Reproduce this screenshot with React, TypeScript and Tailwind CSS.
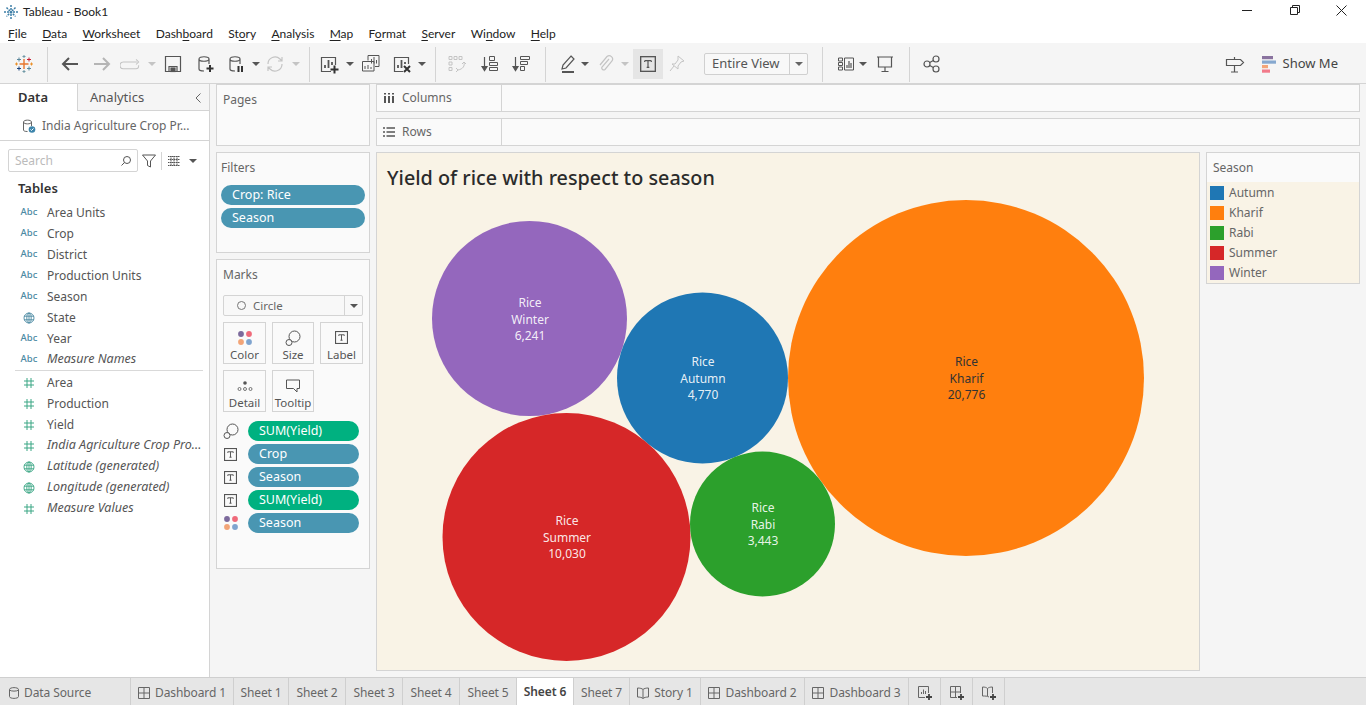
import type { ReactNode } from "react";

const menus: [string, string, string][] = [
  ["", "F", "ile"],
  ["", "D", "ata"],
  ["", "W", "orksheet"],
  ["Dash", "b", "oard"],
  ["St", "o", "ry"],
  ["", "A", "nalysis"],
  ["", "M", "ap"],
  ["F", "o", "rmat"],
  ["", "S", "erver"],
  ["Wi", "n", "dow"],
  ["", "H", "elp"],
];

const dimensions = ["Area Units", "Crop", "District", "Production Units", "Season", "State", "Year", "Measure Names"];
const measures = ["Area", "Production", "Yield", "India Agriculture Crop Pro...", "Latitude (generated)", "Longitude (generated)", "Measure Values"];
const legend = [
  ["Autumn", "bg-[#1f77b4]"],
  ["Kharif", "bg-[#ff7f0e]"],
  ["Rabi", "bg-[#2ca02c]"],
  ["Summer", "bg-[#d62728]"],
  ["Winter", "bg-[#9467bd]"],
];
const bubbles = [
  { cx: 589, cy: 225, r: 178, fill: "#ff7f0e", ink: "#333333", textY: 213, lines: ["Rice", "Kharif", "20,776"] },
  { cx: 152.5, cy: 165.5, r: 97.5, fill: "#9467bd", ink: "#ffffff", textY: 154, lines: ["Rice", "Winter", "6,241"] },
  { cx: 325.5, cy: 225, r: 85.5, fill: "#1f77b4", ink: "#ffffff", textY: 213, lines: ["Rice", "Autumn", "4,770"] },
  { cx: 189.5, cy: 384, r: 124, fill: "#d62728", ink: "#ffffff", textY: 372, lines: ["Rice", "Summer", "10,030"] },
  { cx: 385.5, cy: 371, r: 72.5, fill: "#2ca02c", ink: "#ffffff", textY: 359, lines: ["Rice", "Rabi", "3,443"] },
];

function Icon({ className = "", size = 20, children }: { className?: string; size?: number; children: ReactNode }) {
  return (
    <svg
      viewBox="0 0 20 20"
      width={size}
      height={size}
      fill="none"
      stroke="currentColor"
      strokeWidth="1.2"
      className={`shrink-0 ${className}`}
    >
      {children}
    </svg>
  );
}

function Caret({ className = "text-[#777]" }: { className?: string }) {
  return <span className={`h-0 w-[8px] shrink-0 border-x-[4px] border-t-[4px] border-x-transparent border-t-current ${className}`} />;
}

function Sep({ className = "" }: { className?: string }) {
  return <span className={`h-[35px] w-px shrink-0 bg-[#d4d4d4] ${className}`} />;
}

function TableauLogo() {
  return (
    <svg viewBox="0 0 20 20" width={20} height={20} strokeWidth="1" className="shrink-0">
      <path d="M10 5v10M5.5 10h9" stroke="#e8762d" strokeWidth="1.4" />
      <path d="M5 3.5v4M3 5.5h4" stroke="#5b879b" />
      <path d="M15 3.5v4M13 5.5h4" stroke="#c72035" />
      <path d="M5 12.5v4M3 14.5h4" stroke="#1f447e" />
      <path d="M15 12.5v4M13 14.5h4" stroke="#59879b" />
      <path d="M10 1v3M8.5 2.5h3M10 16v3M8.5 17.5h3" stroke="#7099a6" />
      <path d="M2.5 8.5v3M1 10h3M17.5 8.5v3M16 10h3" stroke="#eb912b" />
    </svg>
  );
}

function Hash({ className = "" }: { className?: string }) {
  return (
    <svg viewBox="0 0 12 12" width={12} height={12} fill="none" stroke="currentColor" strokeWidth="1" className={className}>
      <path d="M4 1v10M8 1v10M1 4h10M1 8h10" />
    </svg>
  );
}

function Globe({ className = "" }: { className?: string }) {
  return (
    <svg viewBox="0 0 12 12" width={12} height={12} fill="none" stroke="currentColor" strokeWidth="0.9" className={className}>
      <circle cx="6" cy="6" r="5" />
      <ellipse cx="6" cy="6" rx="2.2" ry="5" />
      <path d="M1 4.2h10M1 7.8h10M6 1v10" />
    </svg>
  );
}

function TBox({ size = 12 }: { size?: number }) {
  return (
    <svg viewBox="0 0 12 12" width={size} height={size} fill="none" className="shrink-0 text-[#555]">
      <rect x="0.5" y="0.5" width="11" height="11" stroke="currentColor" strokeWidth="1" />
      <path d="M3.5 3.5h5M6 3.5v5M5 8.5h2M3.5 3.5v1M8.5 3.5v1" stroke="currentColor" strokeWidth="0.9" />
    </svg>
  );
}

function Dots() {
  return (
    <svg viewBox="0 0 16 16" width={16} height={16} className="shrink-0">
      <circle cx="4" cy="4" r="2.9" fill="#7c6a9c" />
      <circle cx="12" cy="4" r="2.9" fill="#ef6a7a" />
      <circle cx="4" cy="12" r="2.9" fill="#f2a477" />
      <circle cx="12" cy="12" r="2.9" fill="#7fa4cf" />
    </svg>
  );
}

function SizeGlyph() {
  return (
    <svg viewBox="0 0 16 16" width={16} height={16} fill="none" stroke="#555" strokeWidth="1" className="shrink-0">
      <circle cx="9.5" cy="6.5" r="5.5" />
      <circle cx="4" cy="12.5" r="3" fill="#fafafa" />
    </svg>
  );
}

function MarkButton({ label, children, className = "" }: { label: string; children: ReactNode; className?: string }) {
  return (
    <div className={`flex h-[42px] flex-col items-center border border-[#d4d4d4] pt-[6px] text-[11.5px] leading-[14px] text-[#555] ${className}`}>
      <span className="flex h-[17px] items-center">{children}</span>
      <span className="mt-[2px]">{label}</span>
    </div>
  );
}

function Pill({ label, green, className = "" }: { label: string; green?: boolean; className?: string }) {
  return (
    <div className={`flex h-[20px] items-center rounded-full pl-[11px] text-[12.5px] text-white ${green ? "bg-[#00b180]" : "bg-[#4996b2]"} ${className}`}>
      {label}
    </div>
  );
}

function Field({ label, kind, italic }: { label: string; kind: "abc" | "globe" | "hash" | "geo"; italic?: boolean }) {
  return (
    <div className="flex h-[21px] items-center text-[#555]">
      <span className="flex w-[47px] shrink-0 justify-center pl-[19px] pr-[8px]">
        {kind === "abc" && <span className="text-[9.5px] font-medium text-[#4c8aa3]">Abc</span>}
        {kind === "globe" && <Globe className="text-[#4c8aa3]" />}
        {kind === "hash" && <Hash className="text-[#3ba684]" />}
        {kind === "geo" && <Globe className="text-[#3ba684]" />}
      </span>
      <span className={italic ? "whitespace-nowrap text-[12.5px] italic" : "text-[12px]"}>{label}</span>
    </div>
  );
}

function Shelf({ label, icon }: { label: string; icon: ReactNode }) {
  return (
    <div className="flex h-[28px] border border-[#d4d4d4] bg-[#fafafa]">
      <div className="flex w-[125px] items-center gap-[7px] border-r border-[#d4d4d4] pl-[6px] text-[12px] text-[#666]">
        {icon}
        {label}
      </div>
    </div>
  );
}

function Tab({ label, className, icon, active }: { label?: string; className: string; icon?: ReactNode; active?: boolean }) {
  return (
    <div
      className={`flex h-full shrink-0 items-center justify-center gap-[5px] border-r border-[#cfcfcf] text-[12px] tracking-[-0.1px] ${
        active ? "bg-white font-semibold text-[#444]" : "pt-[2px] text-[#666]"
      } ${className}`}
    >
      {icon}
      {label}
    </div>
  );
}

const GridIcon = (
  <svg viewBox="0 0 12 12" width={12} height={12} fill="none" stroke="#666" strokeWidth="1">
    <path d="M.5.5h11v11H.5zM6 .5v11M.5 6h11" />
  </svg>
);

export default function App() {
  return (
    <div className="flex h-[705px] w-[1366px] flex-col overflow-hidden bg-[#f5f5f5] font-['Noto_Sans','Open_Sans',sans-serif]">
      {/* window title */}
      <div className="flex h-[22px] shrink-0 items-center bg-white pl-[3px] pt-[1px] font-['Lato',sans-serif] text-[12px] text-[#222]">
        <svg viewBox="0 0 16 16" width={16} height={16} fill="none" stroke="#3d7ea6" strokeWidth="1.5" className="mr-[4px]">
          <path d="M8 1v14M1 8h14M3.5 3.5l9 9M12.5 3.5l-9 9" strokeDasharray="2 1" />
        </svg>
        Tableau - Book1
        <div className="-mt-[3px] ml-auto flex items-center text-[#222]">
          <span className="mr-[38px] h-px w-[10px] bg-[#222]" />
          <svg viewBox="0 0 10 10" width={10} height={10} fill="none" stroke="#222" strokeWidth="1" className="mr-[36px]">
            <path d="M.5 2.5h7v7h-7zM2.5 2.5v-2h7v7h-2" />
          </svg>
          <svg viewBox="0 0 11 11" width={11} height={11} fill="none" stroke="#222" strokeWidth="1" className="mr-[19px]">
            <path d="M.5.5l10 10M10.5.5l-10 10" />
          </svg>
        </div>
      </div>

      {/* menu bar */}
      <div className="flex h-[21px] shrink-0 items-center gap-[15.3px] bg-white pl-[8px] pt-[2px] font-['Lato',sans-serif] text-[12px] text-[#222]">
        {menus.map(([a, b, c]) => (
          <span key={a + b + c}>
            {a}
            <span className="underline underline-offset-2">{b}</span>
            {c}
          </span>
        ))}
      </div>

      {/* toolbar */}
      <div className="flex h-[41px] shrink-0 items-center border-b border-[#d4d4d4] bg-[#f5f5f5] pr-[28px] pt-[2px] text-[#555]">
        <span className="ml-[14px]"><TableauLogo /></span>
        <Sep className="ml-[13px]" />
        <Icon className="ml-[12px]" size={20}><path d="M18 10H3M9 4l-6 6 6 6" strokeWidth="2" /></Icon>
        <Icon className="ml-[12px] text-[#b5b5b5]"><path d="M2 10h15M11 4l6 6-6 6" strokeWidth="2" /></Icon>
        <svg viewBox="0 0 26 20" width={22} height={17} fill="none" stroke="#c4c4c4" strokeWidth="1.2" className="ml-[8px] shrink-0">
          <path d="M8 7H4a3 3 0 0 0 0 8h15a3 3 0 0 0 3-3v-1M19 4l3 3-3 3M8 7h12" />
        </svg>
        <Caret className="ml-[6px] text-[#c4c4c4]" />
        <Icon className="ml-[7px]">
          <path d="M2.5 2.5h15v15h-15zM6 17.5v-5h8v5" />
          <rect x="8" y="14" width="4" height="3.5" fill="currentColor" />
        </Icon>
        <Icon className="ml-[12px]">
          <path d="M4 5v10c0 1.5 3 2 5 2M4 5c0-3 10-3 10 0s-10 3-10 0M14 5v5" />
          <path d="M15 11v7M11.5 14.5h7" stroke="#333" strokeWidth="2" />
        </Icon>
        <Icon className="ml-[11px]">
          <path d="M4 5v10c0 1.5 3 2 5 2M4 5c0-3 10-3 10 0s-10 3-10 0M14 5v5" />
          <path d="M12.5 12v6M16 12v6" stroke="#333" strokeWidth="2" />
        </Icon>
        <Caret className="ml-[6px]" />
        <Icon className="ml-[5px] text-[#c4c4c4]">
          <path d="M3 10a7 7 0 0 1 12-5l2 2M17 10a7 7 0 0 1-12 5l-2-2M17 3v4h-4M3 17v-4h4" />
        </Icon>
        <Caret className="ml-[7px] text-[#c4c4c4]" />
        <Sep className="ml-[9px]" />
        <Icon className="ml-[9px]">
          <path d="M12 17.5H2.5v-14h14V11" />
          <path d="M6 14v-3M9.5 14V6M13 11V8" strokeWidth="1.8" />
          <path d="M15.5 11.5v8M11.5 15.5h8" stroke="#333" strokeWidth="2" />
        </Icon>
        <Caret className="ml-[7px]" />
        <Icon className="ml-[7px]">
          <path d="M7 6.5v-5h11v11h-4M1.5 7.5H13V17H1.5z" strokeWidth="1" />
          <path d="M10.5 9.5V5M13 9.5V3M15.5 9.5V6M4 15v-3M7 15v-4M10 15v-2" strokeWidth="1" />
        </Icon>
        <Icon className="ml-[11px]">
          <path d="M11 17.5H2.5v-14h14V10" />
          <path d="M6 14v-3M9.5 14V6M13 10V8" strokeWidth="1.8" />
          <path d="M12 12l6 6M18 12l-6 6" stroke="#333" strokeWidth="2" />
        </Icon>
        <Caret className="ml-[6px]" />
        <Sep className="ml-[9px]" />
        <Icon className="ml-[11px] text-[#c4c4c4]">
          <path d="M2 2.5h3v3H2zM7 2.5h3v3H7zM12 2.5h3v3h-3zM2 8h3v3H2zM2 13.5h3v3H2z" strokeWidth="1" />
          <path d="M17 8c1 4-1 7-6 8M9 14l2 2-2 2M15 10l2-2 2 2" strokeWidth="1" />
        </Icon>
        <Icon className="ml-[13px]">
          <path d="M4.5 3v12" />
          <path d="M2 12.5l2.5 4 2.5-4z" fill="currentColor" />
          <path d="M9.5 2.5h5v4h-5zM9.5 8.5h8v3h-8zM9.5 13.5h8v3h-8z" strokeWidth="1" />
        </Icon>
        <Icon className="ml-[11px]">
          <path d="M4.5 3v12" />
          <path d="M2 12.5l2.5 4 2.5-4z" fill="currentColor" />
          <path d="M9.5 2.5h9v3h-9zM9.5 7.5h7v3h-7zM9.5 12.5h4v4h-4z" strokeWidth="1" />
        </Icon>
        <Sep className="ml-[14px]" />
        <Icon className="ml-[12px]">
          <path d="M13 2l3 3-8 9-4 1 1-4z" />
          <path d="M4 18h12" strokeWidth="2" />
        </Icon>
        <Caret className="ml-[3px]" />
        <Icon className="ml-[6px] text-[#c4c4c4]">
          <path d="M14 5l-7 8a2 2 0 0 0 3 2.5l7-8.5a3.4 3.4 0 0 0-5-4.5l-7 8.5" />
        </Icon>
        <Caret className="ml-[6px] text-[#c4c4c4]" />
        <div className="ml-[4px] flex h-[30px] w-[30px] shrink-0 items-center justify-center bg-[#e5e5e5]">
          <TBox size={16} />
        </div>
        <Icon className="ml-[4px] text-[#c4c4c4]">
          <path d="M11 2l6 5-3 1-3 4 0 3-6-5 3 0 3-4zM7 12l-4 5" strokeWidth="1" />
        </Icon>
        <div className="ml-[17px] flex h-[22px] w-[104px] shrink-0 items-center rounded-[2px] border border-[#d0d0d0] bg-[#f8f8f8] pl-[7px] text-[13px] text-[#555]">
          Entire View
          <span className="ml-auto flex h-full w-[18px] items-center justify-center border-l border-[#d0d0d0]">
            <Caret className="text-[#666]" />
          </span>
        </div>
        <Sep className="ml-[14px]" />
        <Icon className="ml-[13px]">
          <path d="M2.5 4h4v3h-4zM2.5 8.5h4v3h-4zM2.5 13h4v3h-4zM8.5 4h9v12h-9z" strokeWidth="1" />
          <path d="M11 14v-3M13 14V7M15 14v-5" strokeWidth="1.2" />
        </Icon>
        <Caret className="ml-[3px]" />
        <Icon className="ml-[8px]">
          <path d="M2 3h16M3.5 3v10h13V3M10 13v4M6.5 17.5h7" />
        </Icon>
        <Sep className="ml-[14px]" />
        <Icon className="ml-[12px]">
          <circle cx="5" cy="10" r="3" />
          <circle cx="14" cy="5" r="3" />
          <circle cx="14" cy="15" r="3" />
          <path d="M7.7 8.5l3.7-2M7.7 11.5l3.7 2" />
        </Icon>
        <Icon className="ml-auto">
          <path d="M1.5 5.5h14l3 3-3 3h-14zM9.5 3V5.5M9.5 11.5V18M6 18h7" />
        </Icon>
        <svg viewBox="0 0 15 17" width={15} height={17} className="ml-[17px] shrink-0">
          <rect width="11" height="3.2" fill="#8a739f" />
          <rect y="4.5" width="14" height="3.2" fill="#86a8cf" />
          <rect y="9" width="6" height="3.2" fill="#f3a57a" />
          <rect y="13.5" width="8" height="3.2" fill="#f27a8a" />
        </svg>
        <span className="ml-[6px] text-[13px] text-[#444]">Show Me</span>
      </div>

      {/* workspace */}
      <div className="flex min-h-0 flex-1">
        <aside className="flex w-[210px] shrink-0 flex-col border-r border-[#d4d4d4] bg-white">
          <div className="flex h-[27px] shrink-0 items-center text-[13px]">
            <div className="flex h-full w-[78px] items-center border-r border-[#d4d4d4] pl-[18px] font-semibold text-[#333]">Data</div>
            <div className="flex h-full flex-1 items-center border-b border-[#d4d4d4] bg-[#f5f5f5] pl-[12px] pt-[1px] text-[#555]">
              Analytics
              <svg viewBox="0 0 8 12" width={8} height={12} fill="none" stroke="#666" strokeWidth="1" className="ml-auto mr-[7px]">
                <path d="M6.5 1.5L2 6l4.5 4.5" />
              </svg>
            </div>
          </div>
          <div className="flex h-[30px] shrink-0 items-center border-b border-[#d4d4d4] pl-[22px] text-[12px] text-[#666]">
            <svg viewBox="0 0 14 14" width={14} height={14} fill="none" stroke="#666" strokeWidth="1" className="mr-[6px]">
              <path d="M1.5 3v8c0 1 1.5 1.5 4 1.5M1.5 3c0-2.5 8-2.5 8 0s-8 2.5-8 0M9.5 3v4" />
              <circle cx="10" cy="10.5" r="3.3" fill="#3d85ab" stroke="none" />
              <path d="M8.5 10.5l1 1 2-2" stroke="#fff" />
            </svg>
            India Agriculture Crop Pr...
          </div>
          <div className="mt-[8px] flex h-[23px] shrink-0 items-center pl-[8px]">
            <div className="flex h-[23px] w-[130px] items-center rounded-[2px] border border-[#d4d4d4] pl-[6px] text-[12px] text-[#bbb]">
              Search
              <svg viewBox="0 0 12 12" width={12} height={12} fill="none" stroke="#555" strokeWidth="1" className="ml-auto mr-[5px]">
                <circle cx="7" cy="5" r="3.5" />
                <path d="M4.5 7.5L1.5 10.5" />
              </svg>
            </div>
            <svg viewBox="0 0 14 14" width={14} height={14} fill="none" stroke="#555" strokeWidth="1" className="ml-[4px]">
              <path d="M.5 1h13L8.5 7v6l-3-1.5V7z" />
            </svg>
            <span className="ml-[5px] h-[18px] w-px bg-[#d4d4d4]" />
            <svg viewBox="0 0 12 10" width={12} height={10} fill="none" stroke="#555" strokeWidth="1" className="ml-[6px]">
              <path d="M0 .5h12M0 3.5h12M0 6.5h12M0 9.5h12M3 0v10M6 0v10M9 0v10" strokeDasharray="1.5 .5" />
            </svg>
            <Caret className="ml-[9px] text-[#555]" />
          </div>
          <div className="mt-[5px] h-[22px] shrink-0 pl-[18px] text-[13px] font-semibold leading-[22px] text-[#333]">Tables</div>
          <div className="mt-[3px] shrink-0">
            {dimensions.map((d) => (
              <Field key={d} label={d} kind={d === "State" ? "globe" : "abc"} italic={d === "Measure Names"} />
            ))}
          </div>
          <div className="mx-[15px] mb-px h-px w-[188px] shrink-0 bg-[#d9d9d9]" />
          <div className="shrink-0">
            {measures.map((m, i) => (
              <Field key={m} label={m} kind={m.includes("generated") ? "geo" : "hash"} italic={i > 2} />
            ))}
          </div>
        </aside>

        {/* pages, filters, marks */}
        <div className="ml-[6px] flex w-[154px] shrink-0 flex-col gap-[6px]">
          <section className="h-[62px] shrink-0 border border-[#d4d4d4] bg-[#fafafa] pl-[6px] pt-[6px] text-[12px] text-[#666]">Pages</section>
          <section className="h-[101px] shrink-0 border border-[#d4d4d4] bg-[#fafafa] px-[4px] pt-[6px] text-[12px] text-[#666]">
            Filters
            <div className="mt-[8px] flex flex-col gap-[3px]">
              <Pill label="Crop: Rice" />
              <Pill label="Season" />
            </div>
          </section>
          <section className="h-[310px] shrink-0 border border-[#d4d4d4] bg-[#fafafa] px-[6px] pt-[6px] text-[12px] text-[#666]">
            Marks
            <div className="mt-[11px] flex h-[21px] items-center rounded-[2px] border border-[#d4d4d4] bg-[#f8f8f8] pl-[13px] text-[11.5px]">
              <span className="mr-[7px] h-[9px] w-[9px] rounded-full border border-[#777]" />
              Circle
              <span className="ml-auto flex h-full w-[18px] items-center justify-center border-l border-[#d4d4d4]">
                <Caret className="text-[#555]" />
              </span>
            </div>
            <div className="mt-[6px] grid grid-cols-[43px_42px_43px] gap-x-[6px] gap-y-[6px]">
              <MarkButton label="Color"><Dots /></MarkButton>
              <MarkButton label="Size"><SizeGlyph /></MarkButton>
              <MarkButton label="Label"><TBox size={13} /></MarkButton>
              <MarkButton label="Detail">
                <svg viewBox="0 0 16 12" width={16} height={12} fill="none" stroke="#555" strokeWidth="0.8">
                  <circle cx="8" cy="3" r="1.8" fill="#555" stroke="none" />
                  <circle cx="2.5" cy="9" r="1.5" />
                  <circle cx="8" cy="9" r="1.5" />
                  <circle cx="13.5" cy="9" r="1.5" />
                </svg>
              </MarkButton>
              <MarkButton label="Tooltip">
                <svg viewBox="0 0 16 14" width={16} height={14} fill="none" stroke="#555" strokeWidth="1">
                  <path d="M1.5 1h13v8.5h-2.5V13L8.5 9.5H1.5z" />
                </svg>
              </MarkButton>
            </div>
            <div className="mt-[9px] flex flex-col gap-[3px]">
              <div className="flex items-center"><span className="flex w-[25px] justify-start"><SizeGlyph /></span><Pill label="SUM(Yield)" green className="w-[111px]" /></div>
              <div className="flex items-center"><span className="flex w-[25px] justify-start pl-[1px]"><TBox size={13} /></span><Pill label="Crop" className="w-[111px]" /></div>
              <div className="flex items-center"><span className="flex w-[25px] justify-start pl-[1px]"><TBox size={13} /></span><Pill label="Season" className="w-[111px]" /></div>
              <div className="flex items-center"><span className="flex w-[25px] justify-start pl-[1px]"><TBox size={13} /></span><Pill label="SUM(Yield)" green className="w-[111px]" /></div>
              <div className="flex items-center"><span className="flex w-[25px] justify-start"><Dots /></span><Pill label="Season" className="w-[111px]" /></div>
            </div>
          </section>
        </div>

        {/* shelves and view */}
        <div className="ml-[6px] mr-[6px] flex min-w-0 flex-1 flex-col">
          <Shelf
            label="Columns"
            icon={
              <svg viewBox="0 0 12 12" width={12} height={12} stroke="#555" strokeWidth="2">
                <path d="M2 4v7M6 4v7M10 4v7M2 1v1.5M6 1v1.5M10 1v1.5" />
              </svg>
            }
          />
          <div className="mt-[6px]">
            <Shelf
              label="Rows"
              icon={
                <svg viewBox="0 0 12 12" width={12} height={12} stroke="#555" strokeWidth="1.5">
                  <path d="M3.5 2h8.5M3.5 6h8.5M3.5 10h8.5M0 2h2M0 6h2M0 10h2" />
                </svg>
              }
            />
          </div>
          <div className="mt-[6px] flex min-h-0 flex-1 gap-[6px] pb-[6px]">
            <div className="relative flex-1 border border-[#d4d4d4] bg-[#f9f3e6]">
              <h1 className="pl-[10px] pt-[11px] text-[19.8px] font-medium leading-[27px] text-[#2b2b2b]">Yield of rice with respect to season</h1>
              <svg viewBox="0 0 822 517" className="absolute left-0 top-0 h-[517px] w-[822px]">
                {bubbles.map((b) => (
                  <g key={b.fill}>
                    <circle cx={b.cx} cy={b.cy} r={b.r} fill={b.fill} />
                    {b.lines.map((line, i) => (
                      <text
                        key={line}
                        x={b.cx + 0.5}
                        y={b.textY + i * 16.5}
                        textAnchor="middle"
                        fontSize="12"
                        fill={b.ink}
                        fillOpacity={b.ink === "#ffffff" ? 0.9 : 1}
                      >
                        {line}
                      </text>
                    ))}
                  </g>
                ))}
              </svg>
            </div>
            <div className="h-[132px] w-[154px] shrink-0 border border-[#d4d4d4] bg-[#fafafa]">
              <div className="flex h-[29px] items-center pl-[6px] text-[12px] text-[#666]">Season</div>
              <div className="h-[101px] bg-[#f9f3e6] pl-[3px] pt-[1px]">
                {legend.map(([name, color]) => (
                  <div key={name} className="flex h-[20px] items-center text-[12px] text-[#666]">
                    <span className={`mr-[5px] h-[14px] w-[14px] ${color}`} />
                    {name}
                  </div>
                ))}
              </div>
            </div>
          </div>
        </div>
      </div>

      {/* sheet tabs */}
      <div className="flex h-[28px] shrink-0 items-center border-t border-[#cfcfcf] bg-[#e6e6e6]">
        <Tab
          label="Data Source"
          className="w-[131px] !justify-start pl-[9px]"
          icon={
            <svg viewBox="0 0 10 12" width={10} height={12} fill="none" stroke="#666" strokeWidth="1">
              <path d="M.5 2.5c0-2.500 9-2.500 9 0v7c0 2.500-9 2.500-9 0zM.5 3c1.500 1.500 7.500 1.500 9 0" />
            </svg>
          }
        />
        <Tab label="Dashboard 1" className="w-[103px]" icon={GridIcon} />
        <Tab label="Sheet 1" className="w-[55px]" />
        <Tab label="Sheet 2" className="w-[57px]" />
        <Tab label="Sheet 3" className="w-[57px]" />
        <Tab label="Sheet 4" className="w-[57px]" />
        <Tab label="Sheet 5" className="w-[57px]" />
        <Tab label="Sheet 6" className="w-[57px]" active />
        <Tab label="Sheet 7" className="w-[56px]" />
        <Tab
          label="Story 1"
          className="w-[71px]"
          icon={
            <svg viewBox="0 0 12 12" width={12} height={12} fill="none" stroke="#666" strokeWidth="1">
              <path d="M6 2.5C5 1.5 3 1 .5 1v9c2.500 0 4.500.5 5.500 1.500 1-1 3-1.500 5.500-1.500V1C9 1 7 1.500 6 2.500zM6 2.500v9" />
            </svg>
          }
        />
        <Tab label="Dashboard 2" className="w-[104px]" icon={GridIcon} />
        <Tab label="Dashboard 3" className="w-[104px]" icon={GridIcon} />
        <Tab
          className="w-[32px]"
          icon={
            <svg viewBox="0 0 16 16" width={16} height={16} fill="none" stroke="#666" strokeWidth="1">
              <path d="M8 12.5H1.5v-11h10V8M4.500 9V7M6.500 9V4.500M8.500 9V6" />
              <path d="M12 9v6M9 12h6" stroke="#444" strokeWidth="1.8" />
            </svg>
          }
        />
        <Tab
          className="w-[32px]"
          icon={
            <svg viewBox="0 0 16 16" width={16} height={16} fill="none" stroke="#666" strokeWidth="1">
              <path d="M8 12.5H1.5v-11h10V8M6.5 1.5v11M1.5 7h10" />
              <path d="M12 9v6M9 12h6" stroke="#444" strokeWidth="1.8" />
            </svg>
          }
        />
        <Tab
          className="w-[32px]"
          icon={
            <svg viewBox="0 0 16 16" width={16} height={16} fill="none" stroke="#666" strokeWidth="1">
              <path d="M8 12C6.5 11 4 11 1.5 11V2c2.500 0 4 .5 5 1.500 1-1 2.500-1.500 5-1.500v6M6.500 3.500V11" />
              <path d="M12 9v6M9 12h6" stroke="#444" strokeWidth="1.8" />
            </svg>
          }
        />
      </div>
    </div>
  );
}
